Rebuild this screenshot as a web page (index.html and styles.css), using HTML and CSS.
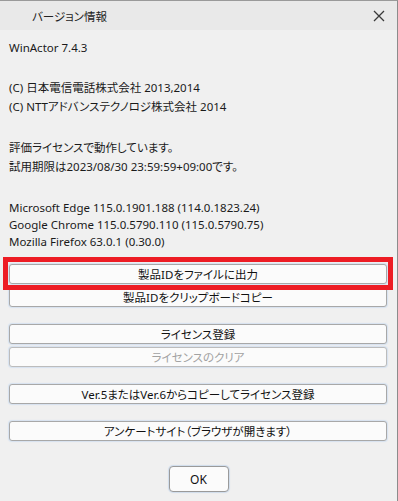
FILE: index.html
```html
<html>
	<head>
		<meta charset="utf-8">
		<meta name="viewport" content="width=device-width">
		<link rel="stylesheet" href="styles.css">
	</head>
	<body>
		<div class="finestra">
			<div class="titolo">
				<span class="titolo-testo">バージョン情報</span>
				<svg class="chiudi" width="12" height="12" viewBox="0 0 12 12">
					<path d="M1 1 L11 11 M11 1 L1 11" stroke="#3a3a3a" stroke-width="1.3" fill="none"/>
				</svg>
			</div>
			<div class="contenuto">
				<p class="riga">WinActor 7.4.3</p>
				<div class="blocco">
					<p class="riga jp">(C) 日本電信電話株式会社 2013,2014</p>
					<p class="riga jp">(C) NTTアドバンステクノロジ株式会社 2014</p>
				</div>
				<div class="blocco">
					<p class="riga jp">評価ライセンスで動作しています。</p>
					<p class="riga jp">試用期限は2023/08/30 23:59:59+09:00です。</p>
				</div>
				<div class="blocco browser">
					<p class="riga">Microsoft Edge 115.0.1901.188 (114.0.1823.24)</p>
					<p class="riga">Google Chrome 115.0.5790.110 (115.0.5790.75)</p>
					<p class="riga">Mozilla Firefox 63.0.1 (0.30.0)</p>
				</div>

				<div class="gruppo primo">
					<button class="pulsante">製品IDをファイルに出力</button>
					<button class="pulsante">製品IDをクリップボードコピー</button>
					<div class="evidenzia"></div>
				</div>
				<div class="gruppo">
					<button class="pulsante">ライセンス登録</button>
					<button class="pulsante spento">ライセンスのクリア</button>
				</div>
				<div class="gruppo">
					<button class="pulsante">Ver.5またはVer.6からコピーしてライセンス登録</button>
				</div>
				<div class="gruppo">
					<button class="pulsante">アンケートサイト（ブラウザが開きます）</button>
				</div>
				<div class="fondo">
					<button class="ok">OK</button>
				</div>
			</div>
		</div>
	</body>
</html>
```

FILE: styles.css
```css
body {
	margin: 0;
	background-color: #f0f0f0;
	font-family: "Noto Sans", "Noto Sans CJK JP", sans-serif;
	font-size: 11.5px;
	font-feature-settings: "palt" 1;
	color: #1a1a1a;
}

.finestra {
	position: relative;
	width: 397px;
	height: 500px;
	border-top: 1px solid #9a9a9a;
	border-right: 1px solid #8c8c8c;
	border-bottom: 1px solid #6e6e6e;
	background-color: #f0f0f0;
	overflow: hidden;
}

.titolo {
	height: 29px;
	background-color: #e9e9e9;
	display: flex;
	align-items: center;
	justify-content: space-between;
	padding: 0 12px 0 32px;
}

.titolo-testo {
	font-family: "Noto Sans CJK JP", sans-serif;
	font-size: 11.5px;
	color: #222;
}

.contenuto {
	padding: 9px 0 0 9px;
	position: relative;
}

.riga {
	margin: 0;
	line-height: 17px;
	white-space: nowrap;
}

.riga.jp {
	line-height: 19px;
}

.blocco {
	margin-top: 22px;
}

.blocco.browser {
	margin-top: 23px;
}

.gruppo {
	display: flex;
	flex-direction: column;
	gap: 3px;
	margin-top: 17px;
	position: relative;
}

.gruppo.primo {
	margin-top: 14px;
}

.pulsante {
	width: 378px;
	height: 20px;
	padding: 0;
	background-color: #fbfbfb;
	border: 1px solid #a8a8a8;
	border-radius: 3px;
	box-shadow: 0 0 1px 1px #d6e2f0;
	font-family: "Noto Sans", "Noto Sans CJK JP", sans-serif;
	font-size: 11.5px;
	font-feature-settings: "palt" 1;
	color: #111;
}

.pulsante.spento {
	color: #a2a2a2;
	border-color: #bcbcbc;
}

.evidenzia {
	position: absolute;
	left: -6px;
	top: -7px;
	width: 380px;
	height: 23px;
	border: 5px solid #ed1c24;
}

.fondo {
	display: flex;
	justify-content: center;
	margin-top: 25px;
	padding-right: 9px;
}

.ok {
	width: 60px;
	height: 26px;
	background-color: #fbfbfb;
	border: 1px solid #9a9a9a;
	border-radius: 4px;
	box-shadow: 0 0 1px 1px #cfdcec;
	font-family: "Noto Sans", sans-serif;
	font-size: 12px;
	color: #111;
}
```
